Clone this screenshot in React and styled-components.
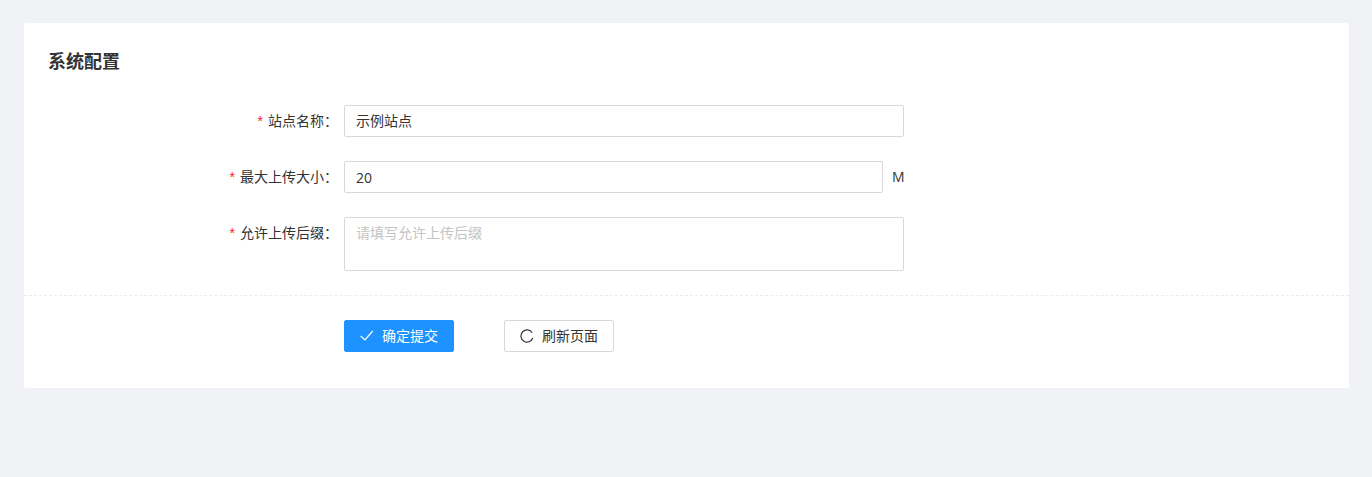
import React from "react";
import styled, { createGlobalStyle } from "styled-components";

const FONT = `"Open Sans", "Noto Sans CJK SC", sans-serif`;

const Global = createGlobalStyle`
  html, body { margin: 0; padding: 0; height: 100%; background: #f0f2f5; }
  body { font-family: ${FONT}; color: #333; }
  * { box-sizing: border-box; }
`;

const Page = styled.div`
  height: 477px;
  padding: 23px 23px 0 24px;
  background: #f0f2f5;
`;

const Card = styled.section`
  height: 365px;
  background: #fff;
  border-radius: 2px;
  padding-top: 24px;
`;

const Title = styled.h2`
  margin: 0 0 28px 24px;
  height: 30px;
  font-size: 18px;
  line-height: 28px;
  font-weight: 700;
  color: #333;
`;

const Form = styled.form`
  display: flex;
  flex-direction: column;
  gap: 24px;
  padding-bottom: 24px;
  border-bottom: 1px dashed #ececec;
`;

const Row = styled.div`
  display: flex;
  align-items: flex-start;
`;

const Label = styled.label`
  flex: 0 0 320px;
  padding-right: 6px;
  height: 32px;
  line-height: 31px;
  text-align: right;
  font-size: 14px;
  color: #333;
`;

const Star = styled.span`
  color: #f5222d;
  margin-right: 5px;
  font-family: "Liberation Sans", sans-serif;
`;

const Input = styled.input`
  display: block;
  width: ${(p) => p.$width}px;
  height: 32px;
  padding: 0 11px ${(p) => (p.$cjk ? "2px" : "0")};
  border: 1px solid #d9d9d9;
  border-radius: 2px;
  outline: none;
  background: #fff;
  font: 14px/28px ${FONT};
  color: #333;
`;

const Unit = styled.span`
  margin-left: 9px;
  line-height: 32px;
  font-size: 14px;
  color: #333;
`;

const TextArea = styled.textarea`
  display: block;
  width: 560px;
  height: 54px;
  padding: 4px 11px;
  border: 1px solid #d9d9d9;
  border-radius: 2px;
  outline: none;
  resize: none;
  font: 14px/22px ${FONT};
  color: #333;
  &::placeholder { color: #c4c4c4; opacity: 1; }
`;

const Actions = styled.div`
  display: flex;
  gap: 50px;
  padding: 24px 0 0 320px;
`;

const Button = styled.button`
  display: flex;
  align-items: center;
  justify-content: center;
  gap: 8px;
  width: 110px;
  height: 32px;
  padding: 0 0 3px;
  border: 1px solid ${(p) => (p.$primary ? "#1e92ff" : "#d9d9d9")};
  border-radius: 2px;
  background: ${(p) => (p.$primary ? "#1e92ff" : "#fff")};
  color: ${(p) => (p.$primary ? "#fff" : "#333")};
  font: 14px ${FONT};
`;

const Icon = styled.svg`
  width: 14px;
  height: 14px;
  margin-top: 3px;
  flex: none;
  fill: none;
  stroke: currentColor;
  stroke-width: 1.2;
`;

export default function App() {
  return (
    <Page>
      <Global />
      <Card>
        <Title>系统配置</Title>
        <Form>
          <Row>
            <Label><Star>*</Star>站点名称：</Label>
            <Input $width={560} $cjk defaultValue="示例站点" />
          </Row>
          <Row>
            <Label><Star>*</Star>最大上传大小：</Label>
            <Input $width={539} defaultValue="20" />
            <Unit>M</Unit>
          </Row>
          <Row>
            <Label><Star>*</Star>允许上传后缀：</Label>
            <TextArea placeholder="请填写允许上传后缀" />
          </Row>
        </Form>
        <Actions>
          <Button $primary type="button">
            <Icon viewBox="0 0 14 14"><path d="M.7 7 5 11 12.7 2" /></Icon>
            确定提交
          </Button>
          <Button type="button">
            <Icon viewBox="0 0 14 14"><path d="M12.2 3.8A6.1 6.1 0 1 0 12.8 9" /></Icon>
            刷新页面
          </Button>
        </Actions>
      </Card>
    </Page>
  );
}
